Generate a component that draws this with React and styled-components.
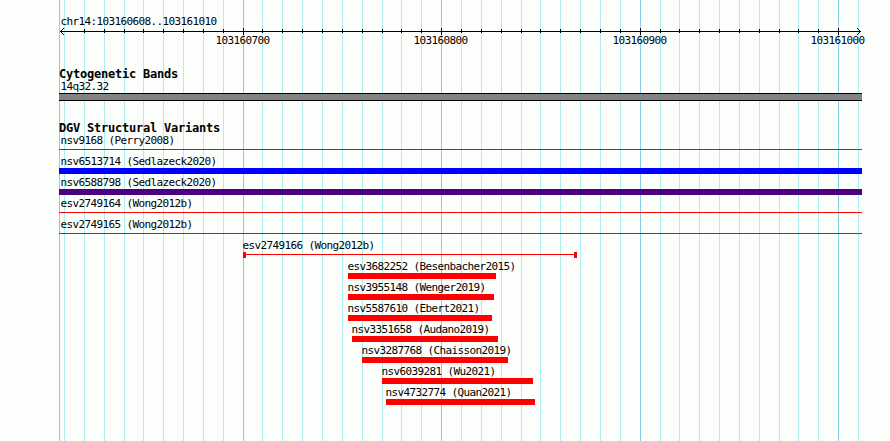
import React from "react";
import styled, { createGlobalStyle, css } from "styled-components";

const GlobalStyle = createGlobalStyle`
  body {
    margin: 0;
    background: #fcfefc;
  }
`;

const LEFT = 59;
const WIDTH = 803;
const HEIGHT = 441;

const MAJOR = [243, 441, 640, 838];
const MINOR = [
  64, 84, 104, 124, 143, 163, 183, 203, 223, 262, 282, 302, 322, 342, 362,
  382, 401, 421, 461, 481, 501, 521, 540, 560, 580, 600, 620, 660, 679, 699,
  719, 739, 759, 779, 798, 818, 858,
];

const VARIANTS = [
  { name: "nsv9168 (Perry2008)", start: 59, end: 862, shape: "line", full: true },
  { name: "nsv6513714 (Sedlazeck2020)", start: 59, end: 862, color: "#0000ff", full: true },
  { name: "nsv6588798 (Sedlazeck2020)", start: 59, end: 862, color: "#4b0082", full: true },
  { name: "esv2749164 (Wong2012b)", start: 59, end: 862, shape: "line", full: true },
  { name: "esv2749165 (Wong2012b)", start: 59, end: 862, shape: "line", full: true },
  { name: "esv2749166 (Wong2012b)", start: 243, end: 577, shape: "capped" },
  { name: "esv3682252 (Besenbacher2015)", start: 348, end: 496 },
  { name: "nsv3955148 (Wenger2019)", start: 348, end: 494 },
  { name: "nsv5587610 (Ebert2021)", start: 348, end: 492 },
  { name: "nsv3351658 (Audano2019)", start: 352, end: 498 },
  { name: "nsv3287768 (Chaisson2019)", start: 362, end: 508 },
  { name: "nsv6039281 (Wu2021)", start: 382, end: 533 },
  { name: "nsv4732774 (Quan2021)", start: 386, end: 535 },
];

const Browser = styled.main`
  position: relative;
  width: 890px;
  height: ${HEIGHT}px;
  overflow: hidden;
  background: #fcfefc;
  color: #000;
  font: 11px/13px "DejaVu Sans Mono", monospace;
  letter-spacing: -0.623px;
  white-space: pre;
`;

const GridLines = styled.svg`
  position: absolute;
  inset: 0;
`;

const Tracks = styled.div`
  position: relative;
  display: flex;
  flex-direction: column;
  width: ${WIDTH}px;
  margin-left: ${LEFT}px;
`;

const Region = styled.div`
  height: 13px;
  margin-top: 15px;
  padding-left: 1.4px;
`;

const Ruler = styled.svg`
  display: block;
  overflow: visible;
`;

const Scale = styled.div`
  display: grid;
  grid-template-columns: 198px 199px 198px 60px;
  height: 13px;
  margin-left: 156.4px;
  margin-top: -1px;
`;

const Track = styled.section`
  margin-top: ${(p) => p.$gap}px;
`;

const Heading = styled.h2`
  height: 13px;
  margin: 0;
  font: bold 12px/13px "DejaVu Sans Mono", monospace;
  letter-spacing: -0.224px;
`;

const BandLabel = styled.div`
  height: 13px;
  margin-top: -1px;
  padding-left: 1.4px;
`;

const Band = styled.div`
  box-sizing: border-box;
  height: 8px;
  border: solid #000;
  border-width: 1px 0;
  background: #848284;
`;

const Variants = styled.div`
  display: grid;
  grid-auto-rows: 19px;
  row-gap: 2px;
  margin-top: -1px;
`;

const Variant = styled.div`
  display: grid;
  grid-template-rows: 13px 6px;
  margin-left: ${(p) => p.$start - LEFT}px;
`;

const VariantLabel = styled.span`
  margin-left: ${(p) => (p.$full ? 1.4 : -0.6)}px;
`;

const shapes = {
  bar: css`
    background: ${(p) => p.$color};
  `,
  line: css`
    background: linear-gradient(#f00, #f00) 0 2px / 100% 1px no-repeat;
  `,
  capped: css`
    box-sizing: border-box;
    border: solid #f00;
    border-width: 0 3px;
    background: linear-gradient(#f00, #f00) 0 2px / 100% 1px no-repeat;
  `,
};

const Extent = styled.div`
  width: ${(p) => p.$width}px;
  ${(p) => shapes[p.$shape]}
`;

function VariantRow({ name, start, end, color = "#ff0000", shape = "bar", full }) {
  return (
    <Variant $start={start}>
      <VariantLabel $full={full}>{name}</VariantLabel>
      <Extent $width={end - start} $shape={shape} $color={color} />
    </Variant>
  );
}

export default function App() {
  return (
    <>
      <GlobalStyle />
      <Browser>
        <GridLines width="890" height={HEIGHT} shapeRendering="crispEdges" aria-hidden="true">
          {MINOR.map((x) => (
            <rect key={x} x={x} width="1" height={HEIGHT} fill="#afeeee" />
          ))}
          {[LEFT, ...MAJOR].map((x) => (
            <rect key={x} x={x} width="1" height={HEIGHT} fill="#87ceeb" />
          ))}
        </GridLines>
        <Tracks>
          <Region>chr14:103160608..103161010</Region>
          <Ruler width={WIDTH} height="7" viewBox={`${LEFT} 28 ${WIDTH} 7`} shapeRendering="crispEdges" aria-hidden="true">
            <rect x="60" y="31" width="801" height="1" />
            {MINOR.filter((x) => x > 64 && x < 858).map((x) => (
              <rect key={x} x={x} y="29" width="1" height="4" />
            ))}
            {MAJOR.map((x) => (
              <rect key={x} x={x} y="28" width="1" height="7" />
            ))}
            {[1, 2, 3].map((d) => (
              <React.Fragment key={d}>
                <rect x={60 + d} y={31 - d} width="1" height="1" />
                <rect x={60 + d} y={31 + d} width="1" height="1" />
                <rect x={860 - d} y={31 - d} width="1" height="1" />
                <rect x={860 - d} y={31 + d} width="1" height="1" />
              </React.Fragment>
            ))}
          </Ruler>
          <Scale>
            <span>103160700</span>
            <span>103160800</span>
            <span>103160900</span>
            <span>103161000</span>
          </Scale>
          <Track $gap={21}>
            <Heading>Cytogenetic Bands</Heading>
            <BandLabel>14q32.32</BandLabel>
            <Band />
          </Track>
          <Track $gap={21}>
            <Heading>DGV Structural Variants</Heading>
            <Variants>
              {VARIANTS.map((v) => (
                <VariantRow key={v.name} {...v} />
              ))}
            </Variants>
          </Track>
        </Tracks>
      </Browser>
    </>
  );
}
